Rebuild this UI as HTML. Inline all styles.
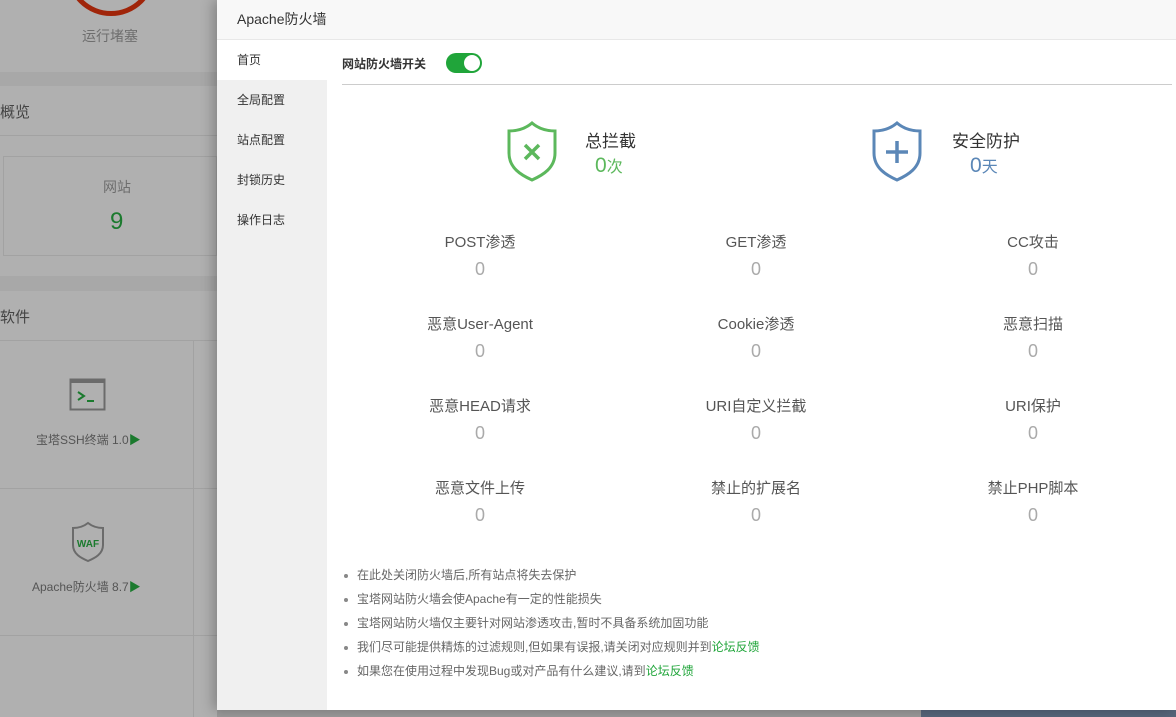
<!DOCTYPE html>
<html><head><meta charset="utf-8"><style>
*{margin:0;padding:0;box-sizing:border-box}
body{width:1176px;height:717px;overflow:hidden;position:relative;background:#b3b3b3;font-family:"Liberation Sans","Noto Sans CJK SC",sans-serif;color:#555}
.a{position:absolute}
.modal{left:217px;top:0;width:959px;height:710px;background:#fff;box-shadow:-4px 0 12px rgba(0,0,0,.25)}
.hd{left:0;top:0;width:959px;height:40px;background:#f8f8f8;border-bottom:1px solid #e8e8e8;font-size:14px;color:#333;line-height:38px;padding-left:20px}
.side{left:0;top:40px;width:110px;height:670px;background:#f0f0f0}
.side div{height:40px;line-height:40px;padding-left:20px;font-size:12px;color:#333}
.side .on{background:#fff}
.st{width:200px;text-align:center}
.st .l{font-size:15px;color:#555}
.st .v{font-size:18px;color:#aaa;margin-top:7px}
ul{list-style:none}
li{font-size:12px;color:#666;height:24px;line-height:24px;position:relative;padding-left:30px}
li:before{content:"";position:absolute;left:17px;top:11px;width:4px;height:4px;border-radius:50%;background:#888}
li b{font-weight:normal;color:#20a53a}
</style></head><body>
<div class="a" style="left:0;top:0;width:217px;height:72px;background:#b0b0b0"></div>
<div class="a" style="left:66px;top:-74px;width:90px;height:90px;border:5px solid #a0250a;border-radius:50%"></div>
<div class="a" style="left:82px;top:26px;font-size:14px;color:#6e6e6e">运行堵塞</div>
<div class="a" style="left:0;top:72px;width:217px;height:14px;background:#a8a8a8"></div>
<div class="a" style="left:0;top:86px;width:217px;height:190px;background:#b0b0b0"></div>
<div class="a" style="left:0;top:101px;font-size:15px;color:#444">概览</div>
<div class="a" style="left:0;top:135px;width:217px;height:1px;background:#a2a2a2"></div>
<div class="a" style="left:3px;top:156px;width:214px;height:100px;border:1px solid #a2a2a2"></div>
<div class="a" style="left:103px;top:177px;font-size:14px;color:#6e6e6e">网站</div>
<div class="a" style="left:110px;top:208px;font-size:24px;color:#1b7a2e">9</div>
<div class="a" style="left:0;top:276px;width:217px;height:15px;background:#a8a8a8"></div>
<div class="a" style="left:0;top:291px;width:217px;height:426px;background:#b0b0b0"></div>
<div class="a" style="left:0;top:306px;font-size:15px;color:#444">软件</div>
<div class="a" style="left:0;top:340px;width:217px;height:1px;background:#a2a2a2"></div>
<div class="a" style="left:193px;top:340px;width:1px;height:377px;background:#a2a2a2"></div>
<div class="a" style="left:0;top:488px;width:217px;height:1px;background:#a2a2a2"></div>
<div class="a" style="left:0;top:635px;width:217px;height:1px;background:#a2a2a2"></div>
<svg class="a" style="left:69px;top:378px" width="38" height="34"><rect x="1.5" y="1.5" width="34" height="30" fill="#b0b0b0" stroke="#6b6b6b" stroke-width="2"/><rect x="1" y="1" width="35" height="4" fill="#6b6b6b"/><path d="M9 14l6 4-6 4" fill="none" stroke="#1b7a2e" stroke-width="2"/><path d="M18 23h7" stroke="#1b7a2e" stroke-width="2"/></svg>
<div class="a" style="left:36px;top:431px;font-size:12px;color:#555">宝塔SSH终端 1.0<span style="color:#1b7a2e">▶</span></div>
<svg class="a" style="left:69px;top:520px" width="38" height="44"><path d="M19 3c5 4 10 5 15 5v17c0 9-8 13-15 16-7-3-15-7-15-16V8c5 0 10-1 15-5z" fill="#b0b0b0" stroke="#6b6b6b" stroke-width="2"/><text x="19" y="27" font-size="10" font-weight="bold" fill="#1b7a2e" text-anchor="middle" font-family="Liberation Sans">WAF</text></svg>
<div class="a" style="left:32px;top:578px;font-size:12px;color:#555">Apache防火墙 8.7<span style="color:#1b7a2e">▶</span></div>
<div class="a" style="left:217px;top:710px;width:704px;height:7px;background:#9a9a9a"></div>
<div class="a" style="left:921px;top:710px;width:255px;height:7px;background:#56657a"></div>

<div class="a modal">
<div class="a hd">Apache防火墙</div>
<div class="a side"><div class="on">首页</div><div>全局配置</div><div>站点配置</div><div>封锁历史</div><div>操作日志</div></div>
<div class="a" style="left:125px;top:55px;font-size:12px;color:#333;font-weight:bold">网站防火墙开关</div>
<div class="a" style="left:229px;top:53px;width:36px;height:20px;border-radius:10px;background:#20a53a"><div class="a" style="left:18px;top:2px;width:16px;height:16px;border-radius:50%;background:#fff"></div></div>
<div class="a" style="left:125px;top:84px;width:830px;height:1px;background:#ccc"></div>

<svg class="a" style="left:289px;top:121px" width="52" height="62"><path d="M26 2c7 6 15 8 23 8v22c0 15-12 22-23 27C15 54 3 47 3 32V10c8 0 16-2 23-8z" fill="none" stroke="#5cb85c" stroke-width="3"/><path d="M19 24l14 14M33 24L19 38" stroke="#5cb85c" stroke-width="3.5"/></svg>
<div class="a" style="left:368px;top:127px;font-size:17px;color:#333">总拦截</div>
<div class="a" style="left:378px;top:153px;font-size:21px;color:#5cb85c">0<span style="font-size:16px">次</span></div>
<svg class="a" style="left:654px;top:121px" width="52" height="62"><path d="M26 2c7 6 15 8 23 8v22c0 15-12 22-23 27C15 54 3 47 3 32V10c8 0 16-2 23-8z" fill="none" stroke="#5b87b7" stroke-width="3"/><path d="M26 20v22M15 31h22" stroke="#5b87b7" stroke-width="3.5"/></svg>
<div class="a" style="left:735px;top:127px;font-size:17px;color:#333">安全防护</div>
<div class="a" style="left:753px;top:153px;font-size:21px;color:#5b87b7">0<span style="font-size:16px">天</span></div>

<div class="a st" style="left:163px;top:231px"><div class="l">POST渗透</div><div class="v">0</div></div>
<div class="a st" style="left:439px;top:231px"><div class="l">GET渗透</div><div class="v">0</div></div>
<div class="a st" style="left:716px;top:231px"><div class="l">CC攻击</div><div class="v">0</div></div>
<div class="a st" style="left:163px;top:313px"><div class="l">恶意User-Agent</div><div class="v">0</div></div>
<div class="a st" style="left:439px;top:313px"><div class="l">Cookie渗透</div><div class="v">0</div></div>
<div class="a st" style="left:716px;top:313px"><div class="l">恶意扫描</div><div class="v">0</div></div>
<div class="a st" style="left:163px;top:395px"><div class="l">恶意HEAD请求</div><div class="v">0</div></div>
<div class="a st" style="left:439px;top:395px"><div class="l">URI自定义拦截</div><div class="v">0</div></div>
<div class="a st" style="left:716px;top:395px"><div class="l">URI保护</div><div class="v">0</div></div>
<div class="a st" style="left:163px;top:477px"><div class="l">恶意文件上传</div><div class="v">0</div></div>
<div class="a st" style="left:439px;top:477px"><div class="l">禁止的扩展名</div><div class="v">0</div></div>
<div class="a st" style="left:716px;top:477px"><div class="l">禁止PHP脚本</div><div class="v">0</div></div>

<ul class="a" style="left:110px;top:563px">
<li>在此处关闭防火墙后,所有站点将失去保护</li>
<li>宝塔网站防火墙会使Apache有一定的性能损失</li>
<li>宝塔网站防火墙仅主要针对网站渗透攻击,暂时不具备系统加固功能</li>
<li>我们尽可能提供精炼的过滤规则,但如果有误报,请关闭对应规则并到<b>论坛反馈</b></li>
<li>如果您在使用过程中发现Bug或对产品有什么建议,请到<b>论坛反馈</b></li>
</ul>
</div>
</body></html>
